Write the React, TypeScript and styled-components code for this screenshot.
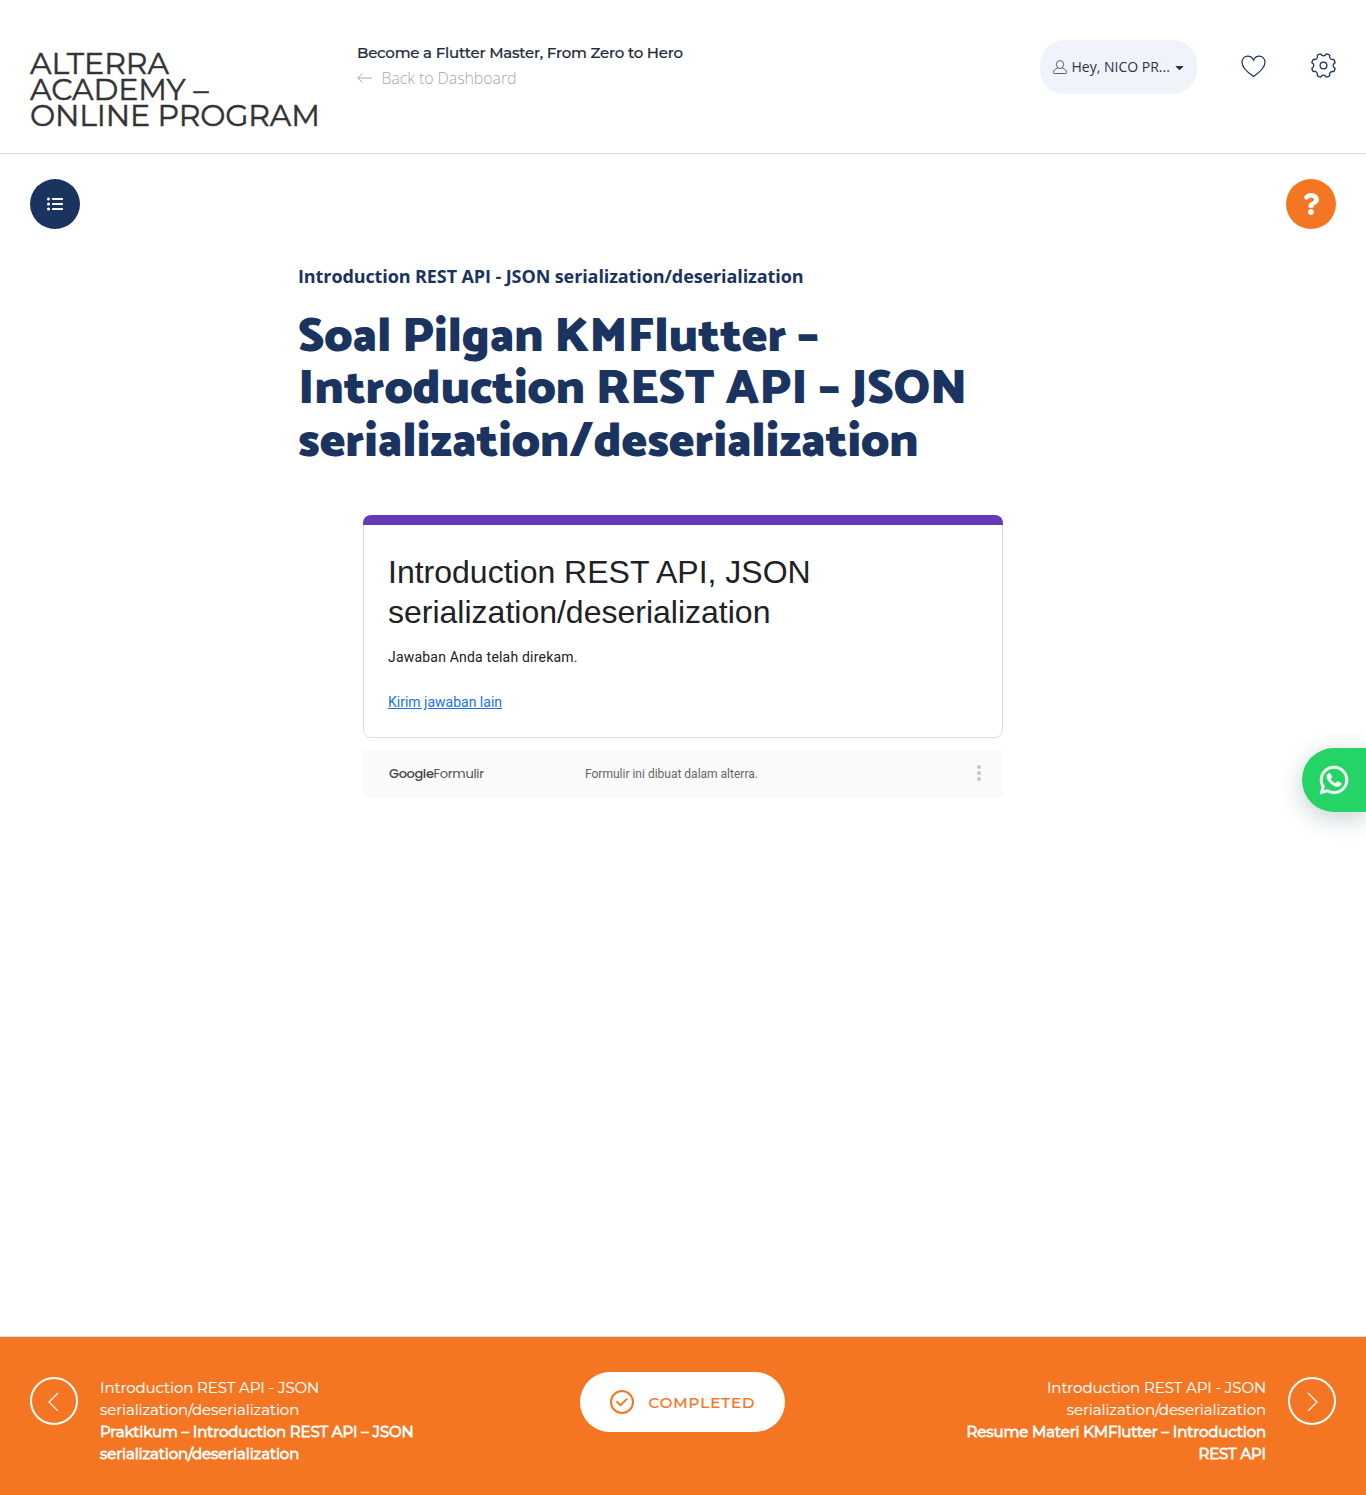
import React from 'react';
import styled, { createGlobalStyle } from 'styled-components';
import { FaListUl, FaQuestion, FaWhatsapp, FaCaretDown } from 'react-icons/fa';

const navy = '#1a335f';
const orange = '#f47622';
const display = `Montserrat, Inter, sans-serif`;

const GlobalStyle = createGlobalStyle`
  * { box-sizing: border-box; }
  body { margin: 0; background: #fff; font-family: "Open Sans", sans-serif; }
  button { border: 0; padding: 0; font: inherit; cursor: pointer; }
  a { color: inherit; text-decoration: none; }
  svg { display: block; flex: none; }
`;

const Page = styled.div`
  display: flex;
  flex-direction: column;
  height: 1495px;
  overflow: hidden;
`;

const Line = styled.span<{ $track?: number }>`
  display: block;
  white-space: nowrap;
  letter-spacing: ${p => p.$track ?? 0}px;
`;

/* Header */
const Header = styled.header`
  display: flex;
  align-items: flex-start;
  height: 154px;
  padding: 40px 30px 0;
  border-bottom: 1px solid #dbdbdb;
`;
const Brand = styled.a`
  width: 327px;
  padding-top: 11px;
  font: 400 30px/26px ${display};
  color: #333;
  -webkit-text-stroke: 0.5px #333;
`;
const Course = styled.div`
  flex: 1;
  padding-top: 2px;
`;
const CourseName = styled.div`
  font: 500 15px/22px ${display};
  color: #1f2d3d;
  -webkit-text-stroke: 0.2px #1f2d3d;
`;
const BackLink = styled.a`
  display: flex;
  align-items: center;
  gap: 9.5px;
  padding-top: 3px;
  font-size: 16px;
  font-weight: 300;
  line-height: 22px;
  color: #a5a8af;
`;
const Tools = styled.nav`
  display: flex;
  align-items: flex-start;
  color: ${navy};
`;
const UserMenu = styled.button`
  display: flex;
  align-items: center;
  width: 157px;
  height: 54px;
  padding-left: 13px;
  border-radius: 24px;
  background: #f0f3fa;
  font-size: 14px;
  color: #26334d;
`;
const UserName = styled.span`
  margin: 0 3px 2px 4.5px;
  white-space: nowrap;
`;
const ToolLink = styled.a<{ $gap: number }>`
  margin: 13px 0 0 ${p => p.$gap}px;
`;

/* Lesson */
const Main = styled.main`
  flex: 1;
  padding-top: 25px;
`;
const Actions = styled.div`
  display: flex;
  justify-content: space-between;
  padding: 0 30px;
`;
const RoundButton = styled.button<{ $bg: string }>`
  display: grid;
  place-items: center;
  width: 50px;
  height: 50px;
  border-radius: 50%;
  background: ${p => p.$bg};
  color: #fff;
`;
const Lesson = styled.article`
  width: 770px;
  margin: 35px auto 0;
  color: ${navy};
`;
const Section = styled.div`
  font-size: 18px;
  font-weight: 700;
  line-height: 25px;
`;
const Title = styled.h1`
  margin: 22.6px 0 45px;
  font: 900 48px/52.8px Catamaran, "Open Sans", sans-serif;
`;

/* Embedded form */
const FormColumn = styled.section`
  width: 640px;
  margin: 0 auto;
  color: #202124;
`;
const FormCard = styled.div`
  display: flex;
  flex-direction: column;
  height: 223px;
  border-radius: 8px;
  overflow: hidden;
`;
const FormAccent = styled.div`
  height: 10px;
  background: #673ab7;
`;
const FormBody = styled.div`
  flex: 1;
  padding: 27px 24px 0;
  border: 1px solid #dadce0;
  border-top: 0;
  border-radius: 0 0 8px 8px;
`;
const FormTitle = styled.h2`
  margin: 0;
  font: 400 32px/40px "Liberation Sans", Arial, sans-serif;
`;
const FormText = styled.p`
  margin: 15px 0 25px;
  font: 400 14px/20px Roboto, sans-serif;
  letter-spacing: 0.2px;
`;
const FormLink = styled.a`
  display: block;
  font: 400 14px/20px Roboto, sans-serif;
  color: #1a73e8;
  text-decoration: underline;
`;
const FormFooter = styled.div`
  display: flex;
  align-items: center;
  height: 48px;
  margin-top: 12px;
  padding: 0 22px 0 26px;
  border-radius: 0 0 6px 6px;
  background: #fafafa;
  font: 400 12px/18px Roboto, sans-serif;
  color: #666;
`;
const FormLogo = styled.div`
  display: flex;
  width: 196px;
  font: 400 13px/18px "Product Sans", "Google Sans", Poppins, Lato, sans-serif;
  letter-spacing: -0.3px;
  color: #555;
`;
const FormBrand = styled.span`
  width: 44.5px;
  font-weight: 500;
  letter-spacing: -0.4px;
  color: #444;
`;
const Dots = styled.div`
  display: grid;
  gap: 2px;
  margin: 0 0 2px auto;
`;
const Dot = styled.i`
  width: 4px;
  height: 4px;
  border-radius: 50%;
  background: #c6c6c6;
`;

/* Chat tab pinned over the page */
const ChatTab = styled.a`
  position: absolute;
  top: 748px;
  right: 0;
  display: grid;
  place-items: center;
  width: 64px;
  height: 64px;
  border-radius: 32px 0 0 32px;
  background: #25d366;
  box-shadow: 0 6px 25px rgba(7, 62, 66, 0.24);
  color: #fff;

  svg { stroke: #fff; stroke-width: 10px; }
`;

/* Footer */
const Footer = styled.footer`
  display: grid;
  grid-template-columns: 550px 205px 1fr;
  align-items: start;
  height: 159px;
  padding: 40px 30px 0;
  border-top: 1px solid #dfe0e4;
  background: ${orange};
  color: #fff;
`;
const Step = styled.a<{ $next?: boolean }>`
  display: flex;
  flex-direction: ${p => (p.$next ? 'row-reverse' : 'row')};
  gap: 22px;
  text-align: ${p => (p.$next ? 'right' : 'left')};
  font: 400 15px/22px ${display};
  -webkit-text-stroke: 0.15px #fff;
`;
const StepCircle = styled.span`
  display: grid;
  place-items: center;
  width: 48px;
  height: 48px;
  flex: none;
  border: 2px solid #fff;
  border-radius: 50%;
`;
const StepName = styled.strong`
  font-weight: 400;
  -webkit-text-stroke: 0.8px #fff;
`;
const Completed = styled.button`
  display: flex;
  align-items: center;
  height: 60px;
  margin-top: -5px;
  padding-left: 30px;
  gap: 14.5px;
  border-radius: 30px;
  background: #fff;
  font: 500 15px/22px ${display};
  color: ${orange};
  -webkit-text-stroke: 0.2px ${orange};
`;
const CompletedLabel = styled.span`
  padding-top: 1px;
  letter-spacing: 1px;
`;

/* Cog outline: eight flat teeth joined by shallow rounded valleys */
const cogPath = (() => {
  const at = (r: number, deg: number) => {
    const a = (deg * Math.PI) / 180;
    return `${(12.5 + r * Math.cos(a)).toFixed(2)} ${(12.5 + r * Math.sin(a)).toFixed(2)}`;
  };
  let d = `M${at(12, 14)}`;
  for (let k = 0; k < 8; k++) {
    const c = 22.5 + k * 45;
    d += `Q${at(12.3, c)} ${at(12, c + 8.5)}C${at(9.3, c + 14)} ${at(8.9, c + 31)} ${at(12, c + 36.5)}`;
  }
  return d + 'Z';
})();

const ArrowLeft = () => (
  <svg width="15" height="10" viewBox="0 0 15 10" fill="none" stroke="#a5a8af">
    <path d="M15 5H.8M5.3.5.8 5l4.5 4.5" />
  </svg>
);
const User = () => (
  <svg width="14" height="14" viewBox="0 0 14 14" fill="none" stroke="#44506a" strokeWidth="0.9">
    <ellipse cx="7" cy="4.5" rx="3.6" ry="4" />
    <path d="M4.8 8C2.4 9 .5 10.2.5 12v.8q0 .7.7.7h11.6q.7 0 .7-.7V12c0-1.8-1.9-3-4.3-4" />
  </svg>
);
const Heart = () => (
  <svg width="25" height="25" viewBox="0 0 25 25" fill="none" stroke="currentColor" strokeWidth="1.2">
    <path d="M12.5 23.5C9 21 1 15.5 1 9.2 1 5.5 3.7 3.2 6.7 3.2c2.6 0 4.6 1.4 5.8 4 1.2-2.6 3.2-4 5.8-4 3 0 5.7 2.3 5.7 6 0 6.3-8 11.8-11.500 14.300Z" />
  </svg>
);
const Cog = () => (
  <svg width="25" height="25" viewBox="0 0 25 25" fill="none" stroke="currentColor" strokeWidth="1.3" strokeLinejoin="round">
    <path d={cogPath} />
    <circle cx="12.5" cy="12.5" r="3.4" />
  </svg>
);
const Chevron = ({ next }: { next?: boolean }) => (
  <svg width="20" height="20" viewBox="0 0 20 20" fill="none" stroke="#fff" strokeWidth="1.2">
    <path d={next ? 'M6 2l9 9-9 9' : 'M14 2l-9 9 9 9'} />
  </svg>
);
const Check = () => (
  <svg width="24" height="24" viewBox="0 0 24 24" fill="none" stroke={orange} strokeWidth="2">
    <circle cx="12" cy="12" r="11" />
    <path d="M6.5 11.3l4.1 3.9 6.6-6.6" />
  </svg>
);

export default function App() {
  return (
    <Page>
      <GlobalStyle />
      <Header>
        <Brand>
          <Line>ALTERRA</Line>
          <Line>ACADEMY –</Line>
          <Line $track={-0.15}>ONLINE PROGRAM</Line>
        </Brand>
        <Course>
          <CourseName><Line $track={-0.21}>Become a Flutter Master, From Zero to Hero</Line></CourseName>
          <BackLink><ArrowLeft /><Line $track={-0.1}>Back to Dashboard</Line></BackLink>
        </Course>
        <Tools>
          <UserMenu><User /><UserName>Hey, NICO PR...</UserName><FaCaretDown size={13} /></UserMenu>
          <ToolLink $gap={44}><Heart /></ToolLink>
          <ToolLink $gap={45}><Cog /></ToolLink>
        </Tools>
      </Header>
      <Main>
        <Actions>
          <RoundButton $bg={navy}><FaListUl size={16} /></RoundButton>
          <RoundButton $bg={orange}><FaQuestion size={22} /></RoundButton>
        </Actions>
        <Lesson>
          <Section><Line $track={-0.1}>Introduction REST API - JSON serialization/deserialization</Line></Section>
          <Title>
            <Line>Soal Pilgan KMFlutter –</Line>
            <Line>Introduction REST API – JSON</Line>
            <Line>serialization/deserialization</Line>
          </Title>
        </Lesson>
        <FormColumn>
          <FormCard>
            <FormAccent />
            <FormBody>
              <FormTitle>
                <Line>Introduction REST API, JSON</Line>
                <Line>serialization/deserialization</Line>
              </FormTitle>
              <FormText>Jawaban Anda telah direkam.</FormText>
              <FormLink>Kirim jawaban lain</FormLink>
            </FormBody>
          </FormCard>
          <FormFooter>
            <FormLogo><FormBrand>Google</FormBrand>Formulir</FormLogo>
            Formulir ini dibuat dalam alterra.
            <Dots><Dot /><Dot /><Dot /></Dots>
          </FormFooter>
        </FormColumn>
      </Main>
      <Footer>
        <Step>
          <StepCircle><Chevron /></StepCircle>
          <div>
            <Line $track={-0.1}>Introduction REST API - JSON</Line>
            <Line $track={-0.1}>serialization/deserialization</Line>
            <StepName>
              <Line $track={-0.1}>Praktikum – Introduction REST API – JSON</Line>
              <Line $track={-0.1}>serialization/deserialization</Line>
            </StepName>
          </div>
        </Step>
        <Completed><Check /><CompletedLabel>COMPLETED</CompletedLabel></Completed>
        <Step $next>
          <StepCircle><Chevron next /></StepCircle>
          <div>
            <Line $track={-0.1}>Introduction REST API - JSON</Line>
            <Line $track={-0.1}>serialization/deserialization</Line>
            <StepName>
              <Line $track={-0.1}>Resume Materi KMFlutter – Introduction</Line>
              <Line $track={-0.1}>REST API</Line>
            </StepName>
          </div>
        </Step>
      </Footer>
      <ChatTab><FaWhatsapp size={32} /></ChatTab>
    </Page>
  );
}
